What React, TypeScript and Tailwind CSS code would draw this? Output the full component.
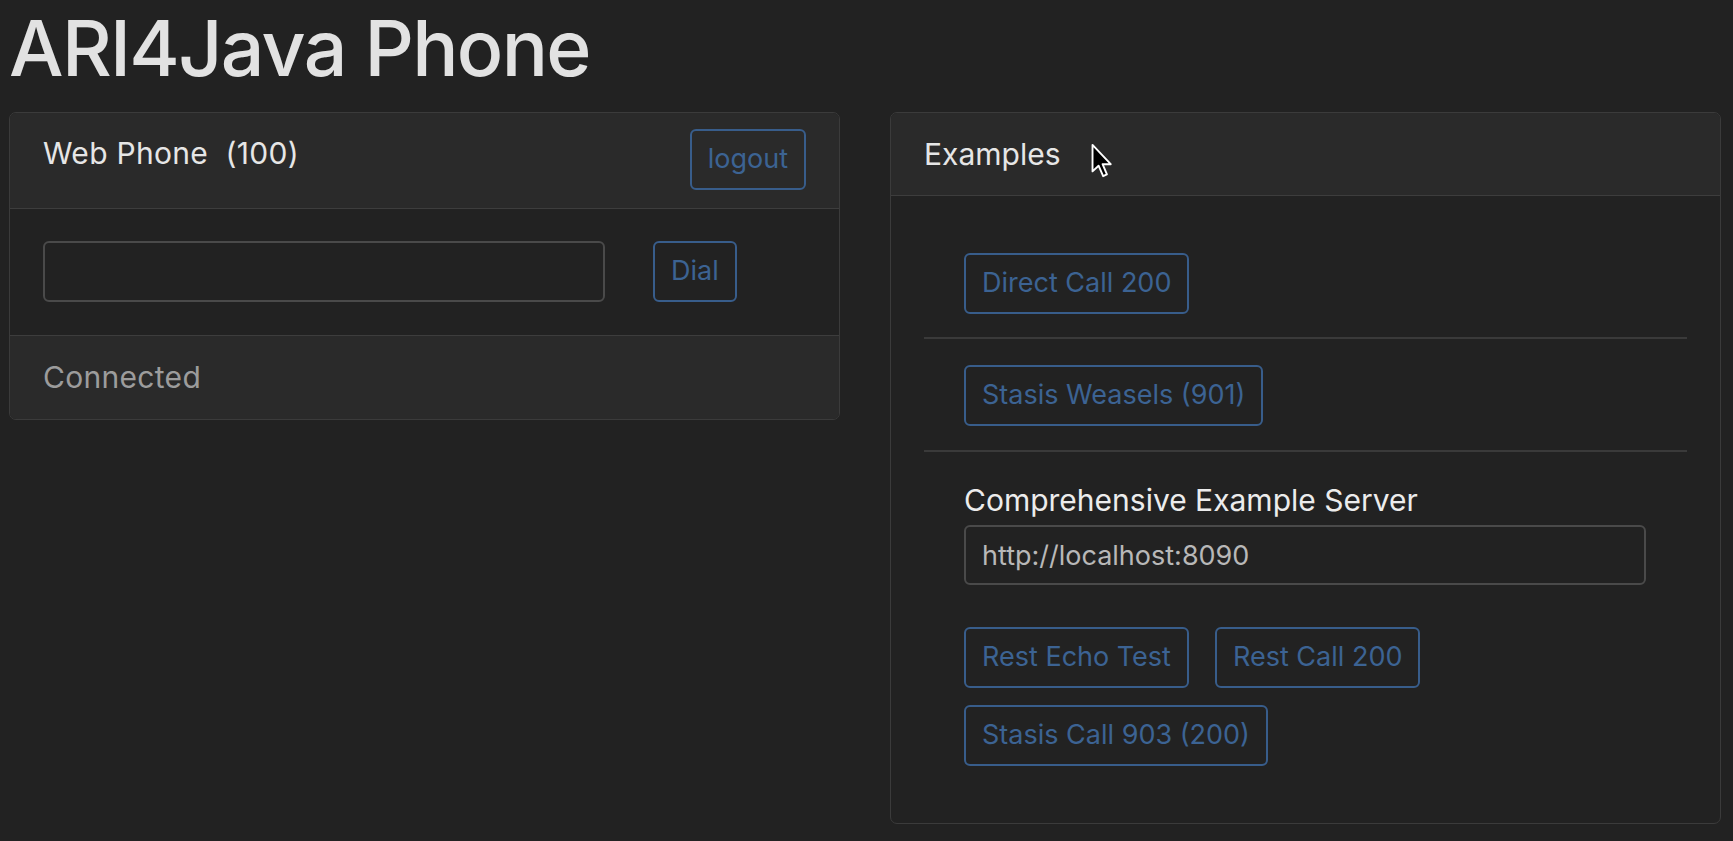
import React from "react";

const btn =
  "inline-flex h-[61px] items-center rounded-[6px] border-2 border-[#385d8b] px-[16px] text-[27px] text-[#3c6393] bg-transparent";

function Cursor() {
  return (
    <svg
      className="absolute left-[1090px] top-[143px]"
      width="24"
      height="36"
      viewBox="0 0 12 19"
    >
      <path
        d="M1 1 L1 15 L4.2 12 L6.6 17.5 L8.6 16.6 L6.3 11.2 L10.6 11.2 Z"
        fill="#000"
        stroke="#fff"
        strokeWidth="1"
        strokeLinejoin="round"
      />
    </svg>
  );
}

export default function App() {
  return (
    <div className="relative min-h-screen w-full bg-[#222222] pl-[9px] pr-[12px] text-[30px] text-[#e6e6e6] font-['Inter','Noto_Sans',sans-serif]">
      {/* Title */}
      <h1 className="pt-[10px] mb-[25px] text-[77px] leading-none font-medium text-[#e2e2e2] tracking-[-1.7px]">
        ARI4Java Phone
      </h1>

      <div className="grid grid-cols-2 items-start gap-[50px]">
        {/* Web phone card */}
        <div className="overflow-hidden rounded-[7px] border border-[#3b3b3b] bg-[#222222]">
          <div className="flex items-start justify-between border-b border-[#3d3d3d] bg-[#2a2a2a] px-[33px] pt-[16px] pb-[18px]">
            <span className="leading-[44px] pt-[2px] tracking-[0.3px]">Web Phone&nbsp;&nbsp;(100)</span>
            <button className={btn}>logout</button>
          </div>
          <div className="flex items-center gap-[48px] border-b border-[#3d3d3d] px-[33px] pt-[32px] pb-[33px]">
            <input
              className="h-[61px] w-[562px] rounded-[6px] border-2 border-[#4a4a4a] bg-[#222222] px-[16px] text-[27px] text-[#b5b5b5] outline-none"
              defaultValue=""
            />
            <button className={btn}>Dial</button>
          </div>
          <div className="bg-[#2a2a2a] px-[33px] pt-[19px] pb-[20px] leading-[44px] text-[#9c9c9c] tracking-[0.3px]">
            Connected
          </div>
        </div>

        {/* Examples card */}
        <div className="overflow-hidden rounded-[7px] border border-[#3b3b3b] bg-[#222222]">
          <div className="border-b border-[#3d3d3d] bg-[#2a2a2a] px-[33px] py-[19px] leading-[44px]">
            Examples
          </div>
          <div className="px-[33px] py-[31px]">
            <div className="border-b-2 border-[#3a3a3a] pl-[40px] pt-[26px] pb-[23px]">
              <button className={btn}>Direct Call 200</button>
            </div>
            <div className="border-b-2 border-[#3a3a3a] pl-[40px] pt-[26px] pb-[24px]">
              <button className={btn}>Stasis Weasels (901)</button>
            </div>
            <div className="pl-[40px] pt-[26px] pb-[26px]">
              <div className="leading-[44px] text-[#ececec]">Comprehensive Example Server</div>
              <input
                className="mt-[3px] h-[60px] w-[682px] rounded-[6px] border-2 border-[#4a4a4a] bg-[#222222] px-[16px] text-[27px] text-[#b8b8b8] outline-none"
                defaultValue="http://localhost:8090"
              />
              <div className="mt-[42px] flex flex-wrap gap-x-[26px] gap-y-[17px]">
                <button className={btn}>Rest Echo Test</button>
                <button className={btn}>Rest Call 200</button>
                <button className={btn}>Stasis Call 903 (200)</button>
              </div>
            </div>
          </div>
        </div>
      </div>

      <Cursor />
    </div>
  );
}
